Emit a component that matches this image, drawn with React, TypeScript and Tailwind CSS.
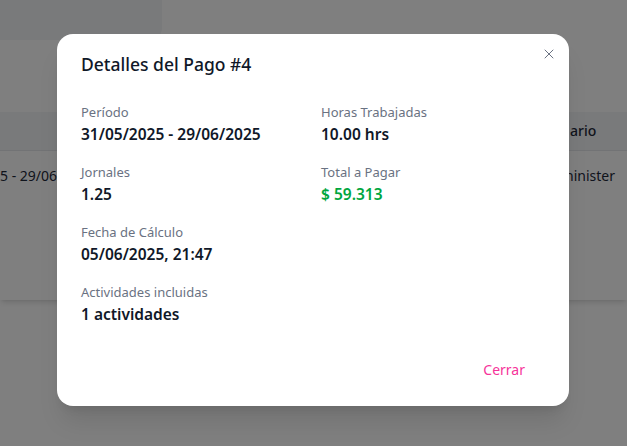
import { X } from "lucide-react";

const font = { fontFamily: '"Noto Sans", "Open Sans", sans-serif' };

function Field({ label, value, accent }: { label: string; value: string; accent?: boolean }) {
  return (
    <div>
      <p className="text-[13px] leading-5 text-gray-500">{label}</p>
      <p className={`text-[15.5px] leading-6 font-semibold ${accent ? "text-green-600" : "text-gray-900"}`}>
        {value}
      </p>
    </div>
  );
}

export default function App() {
  return (
    <div className="relative h-[446px] w-[627px] overflow-hidden bg-white" style={font}>
      {/* page behind the dialog */}
      <div className="h-[40px] w-[162px] rounded-br-xl bg-gray-100" />
      <div className="mt-[72px] bg-white shadow-md">
        <div className="flex h-[38px] items-center justify-between bg-gray-100 text-sm font-medium text-gray-800">
          <span />
          <span className="w-[62px] pl-[5px]">ario</span>
        </div>
        <div className="flex h-[150px] items-start justify-between border-t border-gray-200 pt-[15px] text-sm text-gray-800">
          <span className="w-[57px] overflow-hidden whitespace-nowrap">5 - 29/06/2025</span>
          <span className="w-[62px]">ninister</span>
        </div>
      </div>

      {/* overlay */}
      <div className="absolute inset-0 bg-black/50 pt-[34px] pl-[57px]">
        <div className="relative w-[512px] rounded-2xl bg-white px-6 pt-4 pb-4 shadow-xl">
          <button className="absolute top-3 right-3 text-gray-500">
            <X size={16} strokeWidth={1.5} />
          </button>
          <h2 className="text-[17.5px] leading-7 font-medium text-gray-900">Detalles del Pago #4</h2>
          <div className="mt-6 grid grid-cols-2 gap-4">
            <div className="flex flex-col gap-4">
              <Field label="Período" value="31/05/2025 - 29/06/2025" />
              <Field label="Jornales" value="1.25" />
              <Field label="Fecha de Cálculo" value="05/06/2025, 21:47" />
              <Field label="Actividades incluidas" value="1 actividades" />
            </div>
            <div className="flex flex-col gap-4">
              <Field label="Horas Trabajadas" value="10.00 hrs" />
              <Field label="Total a Pagar" value="$ 59.313" accent />
            </div>
          </div>
          <div className="mt-6 flex justify-end">
            <button className="px-5 py-2.5 text-sm leading-5 text-pink-500">Cerrar</button>
          </div>
        </div>
      </div>
    </div>
  );
}
